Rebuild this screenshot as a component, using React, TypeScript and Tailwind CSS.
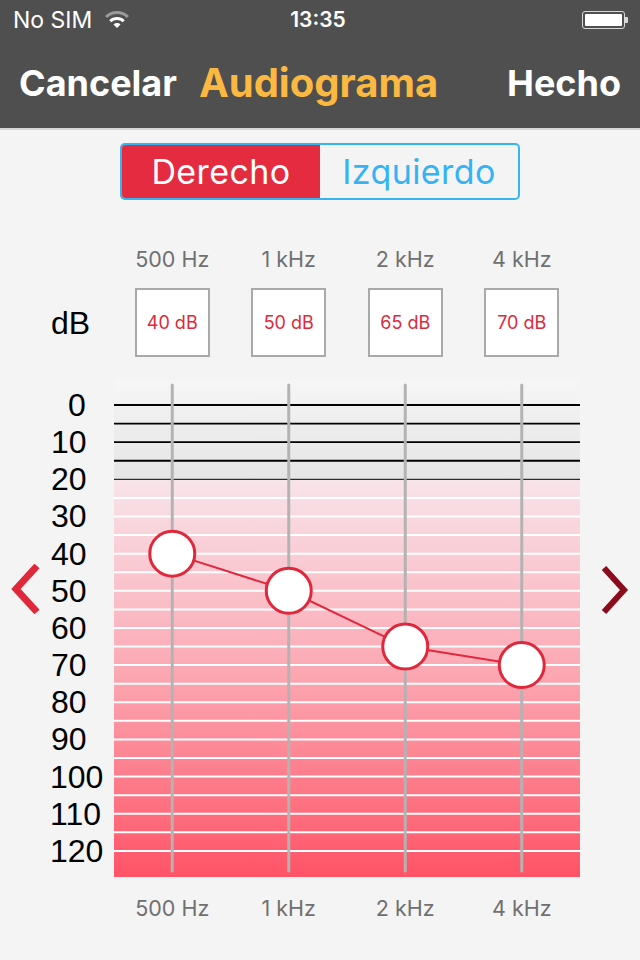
import React from 'react';

const FREQS = ['500 Hz', '1 kHz', '2 kHz', '4 kHz'];
const VALUES = [40, 50, 65, 70];
const DB_LABELS = [0, 10, 20, 30, 40, 50, 60, 70, 80, 90, 100, 110, 120];

// chart geometry (px, relative to chart box)
const CHART_W = 466;
const CHART_H = 498;
const COL = CHART_W / 4;
const Y0 = 26;
const PER_DB = 3.716;
const y = (db: number) => Y0 + db * PER_DB;
const x = (i: number) => COL / 2 + COL * i;

function Wifi() {
  return (
    <svg width="24" height="17" viewBox="0 0 24 17">
      <path d="M-0.02 4.98 A17 17 0 0 1 24.02 4.98 L21.9 7.1 A14 14 0 0 0 2.1 7.1 Z" fill="#9a9a9a" />
      <path d="M4.22 9.22 A11 11 0 0 1 19.78 9.22 L17.66 11.34 A8 8 0 0 0 6.34 11.34 Z" fill="#ffffff" />
      <path d="M12 17 L8.46 13.46 A5 5 0 0 1 15.54 13.46 Z" fill="#ffffff" />
    </svg>
  );
}

function Battery() {
  return (
    <div className="flex items-center">
      <div className="w-[43px] h-[18px] rounded-[3px] border border-[#d8d8d8] p-[2px]">
        <div className="w-full h-full rounded-[1px] bg-white" />
      </div>
      <div className="w-[3px] h-[6px] bg-[#d8d8d8] rounded-r-[1px]" />
    </div>
  );
}

function Chart() {
  const lines = [];
  for (let db = 0; db <= 120; db += 5) {
    const dark = db <= 20;
    lines.push(
      <line
        key={db}
        x1={0}
        x2={CHART_W}
        y1={y(db)}
        y2={y(db)}
        stroke={dark ? '#000000' : '#ffffff'}
        strokeWidth={db === 20 ? 1 : db < 20 ? 1.8 : 2}
      />
    );
  }
  const pts = VALUES.map((v, i) => `${x(i)},${y(v)}`).join(' ');
  return (
    <svg width={CHART_W} height={CHART_H} className="block shrink-0">
      <defs>
        <linearGradient id="top" x1="0" y1="0" x2="0" y2="1">
          <stop offset="0" stopColor="#f6f6f6" />
          <stop offset="1" stopColor="#f2f2f2" />
        </linearGradient>
        <linearGradient id="gray" x1="0" y1="0" x2="0" y2="1">
          <stop offset="0" stopColor="#f1f1f1" />
          <stop offset="1" stopColor="#e5e5e5" />
        </linearGradient>
        <linearGradient id="pink" x1="0" y1="0" x2="0" y2="1">
          <stop offset="0" stopColor="#f8e4ea" />
          <stop offset="0.5" stopColor="#fca6b1" />
          <stop offset="1" stopColor="#ff5366" />
        </linearGradient>
      </defs>
      <rect x={0} y={0} width={CHART_W} height={Y0} fill="url(#top)" />
      <rect x={0} y={Y0} width={CHART_W} height={y(20) - Y0} fill="url(#gray)" />
      <rect x={0} y={y(20)} width={CHART_W} height={CHART_H - y(20)} fill="url(#pink)" />
      {lines}
      {FREQS.map((_, i) => (
        <line key={i} x1={x(i)} x2={x(i)} y1={6} y2={492} stroke="#b3b3b3" strokeWidth={3} strokeLinecap="round" />
      ))}
      <polyline points={pts} fill="none" stroke="#e0283c" strokeWidth={2} />
      {VALUES.map((v, i) => (
        <circle key={i} cx={x(i)} cy={y(v)} r={22.5} fill="#ffffff" stroke="#e0283c" strokeWidth={3} />
      ))}
    </svg>
  );
}

export default function App() {
  return (
    <div className="w-[640px] h-[960px] overflow-hidden bg-[#f4f4f4] font-['Inter',sans-serif]">
      {/* Header */}
      <div className="bg-[#4f4f4f] border-b-2 border-[#d6d6d6]">
        <div className="h-[40px] relative flex items-center px-[13px] text-white">
          <span className="text-[23px]">No SIM</span>
          <span className="ml-[13px] mt-[-2px]"><Wifi /></span>
          <span className="absolute left-0 right-0 text-center text-[21px] font-semibold pointer-events-none">
            <span className="inline-block mr-[4px]">13:35</span>
          </span>
          <span className="ml-auto mr-[-1px]"><Battery /></span>
        </div>
        <div className="h-[88px] flex items-center px-[19px] font-bold">
          <span className="text-[36px] text-white mt-[-2px]">Cancelar</span>
          <span className="ml-[22px] text-[40px] text-[#fbb942] mt-[-2px]">Audiograma</span>
          <span className="ml-auto text-[36px] text-white mt-[-2px]">Hecho</span>
        </div>
      </div>

      {/* Segmented control */}
      <div className="mt-[13px] mx-auto w-[400px] h-[57px] flex rounded-[5px] border-2 border-[#35b5f4] overflow-hidden text-[34px] tracking-[0.4px]">
        <div className="flex-1 bg-[#e52b3f] text-white flex items-center justify-center">Derecho</div>
        <div className="flex-1 text-[#35b3f3] flex items-center justify-center">Izquierdo</div>
      </div>

      {/* Top frequency labels */}
      <div className="mt-[47px] ml-[114px] w-[466px] grid grid-cols-4 h-[25px] text-[21.5px] text-[#707070] leading-[25px]">
        {FREQS.map((f) => (
          <div key={f} className="text-center">{f}</div>
        ))}
      </div>

      {/* dB boxes */}
      <div className="mt-[16px] flex h-[69px]">
        <div className="w-[114px] pl-[51px] flex items-center text-[32px] text-black font-['Liberation_Sans',sans-serif]">dB</div>
        <div className="w-[466px] grid grid-cols-4">
          {VALUES.map((v, i) => (
            <div key={i} className="flex justify-center">
              <div className="w-[75px] h-[69px] bg-white border-2 border-[#a9a9a9] flex items-center justify-center text-[18px] text-[#e0283c]">
                {v} dB
              </div>
            </div>
          ))}
        </div>
      </div>

      {/* Chart row */}
      <div className="mt-[22px] flex">
        <div className="w-[50px] pt-[185px] pl-[10px]">
          <svg width="30" height="50" viewBox="0 0 30 50">
            <polyline points="27,2 6,25 27,48" fill="none" stroke="#e0283c" strokeWidth={7} />
          </svg>
        </div>
        <div className="w-[64px] pt-[7.4px] text-[32px] text-black font-['Liberation_Sans',sans-serif]">
          {DB_LABELS.map((d) => (
            <div
              key={d}
              className={`h-[37.16px] flex items-center ${d === 0 ? 'pl-[18px]' : d >= 100 ? 'pl-0' : 'pl-[1px]'}`}
            >
              {d}
            </div>
          ))}
        </div>
        <Chart />
        <div className="flex-1 pt-[187px] pl-[20px]">
          <svg width="30" height="50" viewBox="0 0 30 50">
            <polyline points="4,2 24,24 4,46" fill="none" stroke="#8a0b1c" strokeWidth={6} />
          </svg>
        </div>
      </div>

      {/* Bottom frequency labels */}
      <div className="mt-[19px] ml-[114px] w-[466px] grid grid-cols-4 h-[25px] text-[21.5px] text-[#707070] leading-[25px]">
        {FREQS.map((f) => (
          <div key={f} className="text-center">{f}</div>
        ))}
      </div>
    </div>
  );
}
